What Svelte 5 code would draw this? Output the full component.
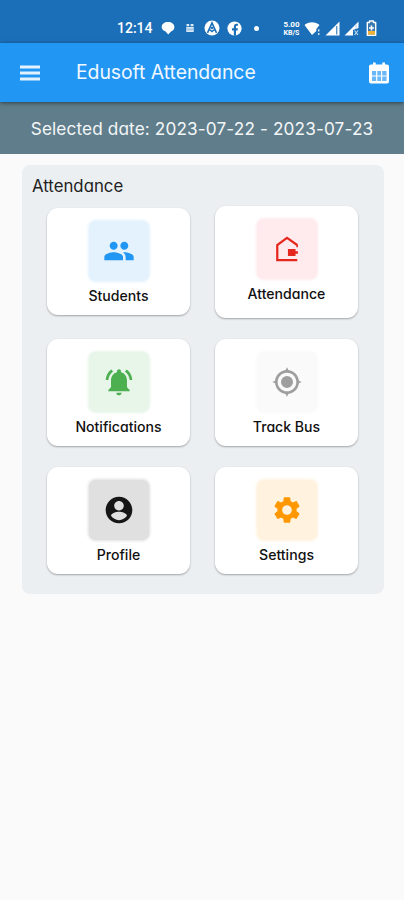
<script lang="ts">
  type Item = {
    label: string;
    icon: string;
    color: string;
    tile: string;
  };

  let startDate = $state('2023-07-22');
  let endDate = $state('2023-07-23');

  const items: Item[] = [
    { label: 'Students', icon: 'people', color: '#2196f3', tile: '#e3f2fd' },
    { label: 'Attendance', icon: 'house', color: '#e5281f', tile: '#ffebee' },
    { label: 'Notifications', icon: 'bell', color: '#4caf50', tile: '#e8f5e9' },
    { label: 'Track Bus', icon: 'target', color: '#9e9e9e', tile: '#fafafa' },
    { label: 'Profile', icon: 'account', color: '#161616', tile: '#e0e0e0' },
    { label: 'Settings', icon: 'gear', color: '#ff9800', tile: '#fff3e0' }
  ];

  const paths: Record<string, string> = {
    people:
      'M16 11c1.66 0 2.99-1.34 2.99-3S17.66 5 16 5s-3 1.34-3 3 1.34 3 3 3zm-8 0c1.66 0 2.99-1.34 2.99-3S9.66 5 8 5 5 6.34 5 8s1.34 3 3 3zm0 2c-2.33 0-7 1.17-7 3.5V19h14v-2.5c0-2.33-4.67-3.5-7-3.5zm8 0c-.29 0-.62.02-.97.05 1.16.84 1.97 1.97 1.97 3.45V19h6v-2.5c0-2.33-4.67-3.5-7-3.5z',
    bell:
      'M7.58 4.08L6.15 2.65C3.75 4.48 2.17 7.3 2.03 10.5h2c.15-2.65 1.51-4.97 3.55-6.42zm12.39 6.42h2c-.15-3.2-1.73-6.02-4.12-7.85l-1.42 1.43c2.02 1.45 3.39 3.77 3.54 6.42zM18 11c0-3.07-1.64-5.64-4.5-6.32V4c0-.83-.67-1.5-1.5-1.5s-1.5.67-1.5 1.5v.68C7.63 5.36 6 7.92 6 11v5l-2 2v1h16v-1l-2-2v-5zm-6 11c.14 0 .27-.01.4-.04.65-.14 1.18-.58 1.44-1.18.1-.24.15-.5.15-.78h-4c.01 1.1.9 2 2.01 2z',
    target:
      'M12 7.500a4.500 4.500 0 1 0 0 9 4.500 4.500 0 0 0 0-9zm8.940 3.500c-.46-4.170-3.770-7.480-7.940-7.940L12 1l-1 2.060C6.830 3.520 3.520 6.830 3.060 11L1 12l2.060 1c.46 4.170 3.770 7.480 7.940 7.940L12 23l1-2.060c4.170-.46 7.480-3.770 7.940-7.940L23 12l-2.060-1zM12 19c-3.870 0-7-3.130-7-7s3.130-7 7-7 7 3.130 7 7-3.130 7-7 7z',
    account:
      'M12 2C6.48 2 2 6.48 2 12s4.48 10 10 10 10-4.48 10-10S17.52 2 12 2zm0 3.2c2 0 3.6 1.6 3.6 3.6s-1.6 3.6-3.6 3.6-3.6-1.6-3.6-3.6S10 5.200 12 5.200zm0 14.400c-2.500 0-4.710-1.280-6-3.220.030-1.990 4-3.080 6-3.080 1.990 0 5.970 1.090 6 3.080-1.290 1.940-3.500 3.220-6 3.220z',
    gear:
      'M19.140 12.940c.04-.3.06-.61.06-.94 0-.32-.02-.64-.07-.94l2.030-1.580c.18-.14.23-.41.12-.61l-1.920-3.320c-.12-.22-.37-.29-.59-.22l-2.390.96c-.5-.38-1.030-.7-1.620-.94L14.400 2.810c-.04-.24-.24-.41-.48-.41h-3.840c-.24 0-.43.17-.47.41L9.250 5.350c-.59.24-1.130.57-1.620.94l-2.390-.96c-.22-.08-.47 0-.59.22L2.740 8.870c-.12.21-.08.47.12.61l2.030 1.580c-.05.3-.09.63-.09.94s.02.64.07.94l-2.030 1.580c-.18.14-.23.41-.12.61l1.920 3.320c.12.22.37.29.59.22l2.390-.96c.5.38 1.030.7 1.620.94l.36 2.540c.05.24.24.41.48.41h3.840c.24 0 .44-.17.47-.41l.36-2.540c.59-.24 1.130-.56 1.620-.94l2.390.96c.22.08.47 0 .59-.22l1.920-3.320c.12-.22.07-.47-.12-.61l-2.010-1.580zM12 15.600c-1.980 0-3.600-1.620-3.600-3.600s1.620-3.600 3.600-3.600 3.600 1.620 3.600 3.600-1.620 3.600-3.600 3.600z'
  };
</script>

<div class="screen">
  <div class="status-bar">
    <span class="clock">12:14</span>
    <svg class="chat" viewBox="0 0 14 14" width="14" height="14">
      <path d="M7 1C3.400 1 .7 3 .7 6c0 2.200 1.600 3.900 3.900 4.500L7.200 13.600 10 10.500c2.200-.8 3.400-2.500 3.400-4.500C13.400 3 10.600 1 7 1z" fill="#fff" />
    </svg>
    <svg class="app" viewBox="0 0 8 10" width="8" height="10">
      <path d="M.5 1h2.700v2.200H.5zM4.600 1h2.900v2.200H4.600zM.3 4h7.400v5H.3z" fill="#fff" opacity=".85" />
      <path d="M2 5.300v2.300M4 5.300v2.300M6 5.300v2.300" stroke="#5c9bd0" stroke-width=".8" />
    </svg>
    <svg class="badge" viewBox="0 0 16 16" width="16" height="16">
      <circle cx="8" cy="8" r="7.500" fill="#fff" />
      <path d="M3.500 12.800L8 3l4.500 9.800M5.500 9.500L8 11.500l2.500-2" fill="none" stroke="#1b6fb8" stroke-width="1.600" />
      <circle cx="8" cy="8" r="1.200" fill="#1b6fb8" />
    </svg>
    <svg class="facebook" viewBox="0 0 16 16" width="15" height="15">
      <circle cx="8" cy="8" r="7.600" fill="#fff" />
      <path d="M7.300 15.700V10H5.300V7.700h2V6.100c0-2 1.200-3.100 3-3.100.8 0 1.400.1 1.400.1V5h-.9c-.9 0-1.200.6-1.200 1.200v1.500h2L11.300 10H9.600v5.700z" fill="#1b6fb8" />
    </svg>
    <span class="dot"></span>
    <span class="speed"><b>5.00</b><b>KB/S</b></span>
    <svg class="wifi" viewBox="0 0 17 15" width="17" height="15">
      <path d="M.5 4C4.800.2 11.200.2 15.500 4L12.300 8v2L8 14z" fill="#fff" />
      <path d="M14.700 8.300v2.200M14.700 12v2" stroke="#fff" stroke-width="1.500" opacity=".8" />
    </svg>
    <svg class="signal" viewBox="0 0 15 15" width="15" height="15">
      <path d="M.5 14.500L14.500.5v14z" fill="#fff" />
      <path d="M11.700 5v8.500" stroke="#5794c8" stroke-width="1.400" />
    </svg>
    <svg class="signal" viewBox="0 0 15 15" width="15" height="15">
      <path d="M.5 14.500L14.500.5V7L9 9v5.500z" fill="#fff" />
      <path d="M12 3.500V8M10.500 9.500l3.500 4.500M14 9.500L10.500 14" stroke="#bfd8ee" stroke-width="1.200" />
    </svg>
    <svg class="battery" viewBox="0 0 11 16" width="11" height="16">
      <path d="M3.500 1h4v1.500h2.200v12.700H1.300V2.500h2.200z" fill="#3b78ad" stroke="#fff" stroke-width="1.400" stroke-linejoin="round" />
      <path d="M2 11h7v3.500H2z" fill="#f2b134" />
      <path d="M5.500 5.500v5M3 8h5" stroke="#fff" stroke-width="1.600" />
    </svg>
  </div>

  <header class="app-bar">
    <button class="icon-btn" aria-label="Open menu">
      <svg viewBox="0 0 20 16" width="20" height="16">
        <path d="M0 2h20M0 8h20M0 14h20" stroke="#e4f2fe" stroke-width="2.800" />
      </svg>
    </button>
    <h1>Edusoft Attendance</h1>
    <button class="icon-btn" aria-label="Pick dates">
      <svg viewBox="0 0 20 22" width="20" height="22">
        <path d="M2 2.500h2V.5h2.700v2h6.600v-2H16v2h2a2 2 0 0 1 2 2v15a2 2 0 0 1-2 2H2a2 2 0 0 1-2-2v-15a2 2 0 0 1 2-2z" fill="#fff" />
        <path d="M3 9h14.500v10H3z" fill="#69b7f6" />
        <path d="M3 14h14.500M7.700 9v10M12.600 9v10" stroke="#fff" stroke-width="1.200" />
      </svg>
    </button>
  </header>

  <div class="date-bar">
    <span>Selected date: {startDate} - {endDate}</span>
  </div>

  <main class="panel">
    <h2>Attendance</h2>
    <div class="grid">
      {#each items as item (item.label)}
        <button class="card" class:raised={item.label === 'Attendance'}>
          <span class="tile" style="--tile: {item.tile}; color: {item.color}">
            <svg viewBox="0 0 24 24" width="32" height="32">
              {#if item.icon === 'house'}
                <path
                  d="M19.600 9L12 3.700 4.700 9v11.300h15"
                  fill="none"
                  stroke="currentColor"
                  stroke-width="1.700"
                />
                <path d="M19.600 8.500v2.200" stroke="currentColor" stroke-width="1.200" />
                <path d="M12.700 12h5.700v1.700h1.800v1.800h-1.800v1.700h-5.700z" fill="currentColor" />
              {:else}
                <path d={paths[item.icon]} fill="currentColor" />
              {/if}
            </svg>
          </span>
          <span class="label">{item.label}</span>
        </button>
      {/each}
    </div>
  </main>
</div>

<style>
  :global(body) {
    background: #fafafa;
  }

  .screen {
    height: 900px;
    overflow: hidden;
    background: #fafafa;
    font-family: Inter, 'Open Sans', sans-serif;
    font-feature-settings: 'cv11' 1;
  }

  .status-bar {
    display: flex;
    align-items: center;
    box-sizing: border-box;
    height: 43px;
    padding: 13px 0 0 117px;
    background: #1b6fb8;
    color: #fff;
  }

  .status-bar svg {
    flex: none;
  }

  .clock {
    width: 44px;
    font: 500 14px Roboto, sans-serif;
    white-space: nowrap;
  }

  .app {
    margin-left: 11px;
  }

  .badge {
    margin-left: 10px;
  }

  .facebook {
    margin-left: 7px;
  }

  .dot {
    width: 5px;
    height: 5px;
    margin: 0 23px 0 12px;
    border-radius: 50%;
    background: #fff;
  }

  .speed {
    display: flex;
    flex-direction: column;
    width: 19px;
    margin-right: 3px;
    font: 7px/9px Roboto, sans-serif;
    text-align: center;
  }

  .speed b:first-child {
    font-size: 8px;
    line-height: 9px;
  }

  .speed b:last-child {
    line-height: 8px;
  }

  .signal {
    margin-left: 4px;
  }

  .battery {
    margin-left: 7px;
  }

  .app-bar {
    position: relative;
    display: flex;
    align-items: center;
    box-sizing: border-box;
    height: 59px;
    padding: 0 15px 0 20px;
    background: #2196f3;
    box-shadow: 0 1px 4px rgba(0, 0, 0, 0.5);
  }

  .icon-btn {
    display: flex;
    padding: 0;
    border: 0;
    background: none;
  }

  h1 {
    flex: 1;
    margin: -2px 0 0 36px;
    color: #f0f8ff;
    font-size: 19.4px;
    font-weight: 400;
    letter-spacing: -0.05px;
  }

  .date-bar {
    display: flex;
    align-items: center;
    justify-content: center;
    height: 52px;
    background: #607d8b;
    color: #f4f7f8;
    font-size: 17.2px;
    letter-spacing: 0.13px;
    white-space: nowrap;
  }

  .panel {
    box-sizing: border-box;
    width: 362px;
    height: 429px;
    margin: 11px 0 0 22px;
    padding: 10px 26px 0 25px;
    border-radius: 8px;
    background: #eceff1;
  }

  h2 {
    height: 22px;
    margin: 0 0 9px -15px;
    color: #222;
    font-size: 16.8px;
    font-weight: 400;
    line-height: 22px;
  }

  .grid {
    display: grid;
    grid-template-columns: 143px 143px;
    grid-template-rows: 113px 107px 107px;
    gap: 21px 25px;
    align-items: center;
    margin-top: -1px;
  }

  .card {
    display: flex;
    flex-direction: column;
    align-items: center;
    box-sizing: border-box;
    height: 107px;
    padding: 12px 0 0;
    border: 0;
    border-radius: 11px;
    background: #fff;
    box-shadow: 0 1px 2px rgba(0, 0, 0, 0.32);
    font: inherit;
    font-feature-settings: inherit;
  }

  .card.raised {
    height: 112px;
  }

  .tile {
    display: flex;
    align-items: center;
    justify-content: center;
    width: 60px;
    height: 60px;
    margin: 1px 0 4px;
    border-radius: 7px;
    background: var(--tile);
    box-shadow: 0 0 3px 1px var(--tile);
  }

  .label {
    color: #111;
    font-size: 14.1px;
    font-weight: 500;
    line-height: 22px;
  }
</style>
